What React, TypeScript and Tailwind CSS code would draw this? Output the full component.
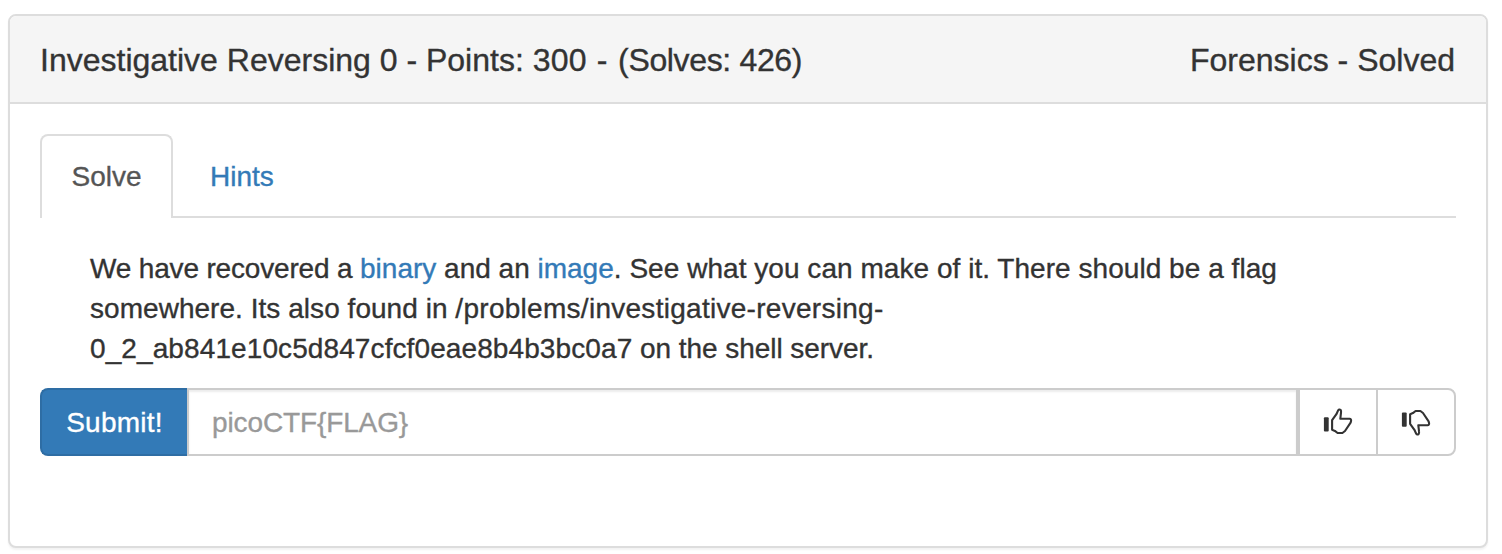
import React from "react";

function ThumbIcon({ down = false }: { down?: boolean }) {
  return (
    <svg width="30" height="28" viewBox="0 0 30 28" fill="none" className={down ? "-scale-y-100" : ""}>
      <rect x="0.9" y="9.2" width="4.8" height="14.4" rx="1" fill="#333" />
      <path
        d="M9.1 12.2 L13.4 6.2 L15 2.6 Q16.2 0.8 17.5 1.8 Q18.4 2.8 18 4.8 L17.3 10.8 L26.6 10.8 Q28.3 10.9 28.1 12.8 L27.6 14.6 L22 23 L19.4 25 L14.6 25 L11.9 22.9 L9.1 21.8 Z"
        stroke="#333"
        strokeWidth="2.1"
        strokeLinejoin="round"
      />
    </svg>
  );
}

export default function App() {
  return (
    <div className="h-[554px] w-[1502px] overflow-hidden bg-white pt-[14px] pl-2 font-['Liberation_Sans',Arial,sans-serif] text-[28px] leading-10 text-[#333] [-webkit-text-stroke:0.35px]">
      <section className="h-[534px] w-[1480px] overflow-hidden rounded-lg border-2 border-[#ddd] bg-white shadow-[0_2px_2px_rgba(0,0,0,0.05)]">
        <header className="flex h-[88px] items-center justify-between border-b-2 border-[#ddd] bg-[#f5f5f5] px-[30px] pt-[2px] text-[32px] leading-9">
          <h3 className="whitespace-nowrap">
            Investigative Reversing 0 - Points: <span className="tracking-[0.3px]">300</span>
            <span className="tracking-[0.9px]"> - </span>
            <span className="tracking-[-0.35px]">(Solves: 426)</span>
          </h3>
          <span className="mr-px whitespace-nowrap">Forensics - Solved</span>
        </header>

        <div className="px-[30px] pt-[30px]">
          <nav className="flex h-[84px]">
            <a className="flex w-[133px] items-center justify-center rounded-t-lg border-2 border-b-0 border-[#ddd] text-[#555]">
              Solve
            </a>
            <div className="-ml-[2px] flex flex-1 items-center rounded-bl-[2px] border-b-2 border-[#ddd] pt-[3px] pl-[39px]">
              <a className="text-[#337ab7]">Hints</a>
            </div>
          </nav>

          <p className="mt-[31px] ml-[50px] h-[120px] whitespace-nowrap">
            <span className="block tracking-[0.04px]">
              <span className="tracking-[-0.17px]">We have recovered a </span>
              <a className="tracking-normal text-[#337ab7]">binary</a>
              <span className="tracking-normal"> and an </span>
              <a className="tracking-normal text-[#337ab7]">image</a>. See what you can make of it. There should be a flag
            </span>
            <span className="block tracking-[0.04px]">
              somewhere. Its also found in <span className="tracking-[0.28px]">/problems/investigative-reversing-</span>
            </span>
            <span className="block">
              <span className="tracking-[0.1px]">0_2_ab841e10c5d847cfcf0eae8b4b3bc0a7</span>
              <span className="tracking-[-0.06px]"> on the shell server.</span>
            </span>
          </p>

          <form className="mt-[19px] flex h-[68px]">
            <button type="button" className="w-[147px] rounded-l-lg border-2 border-r-0 border-[#2e6da4] bg-[#337ab7] pt-px tracking-[0.25px] text-white">
              Submit!
            </button>
            <input
              className="w-[1111px] border-2 border-[#ccc] bg-white pt-[2px] pr-6 pl-[23px] tracking-[-0.12px] shadow-[inset_0_2px_2px_rgba(0,0,0,0.075)] outline-none placeholder:text-[#999]"
              placeholder="picoCTF{FLAG}"
            />
            <button type="button" aria-label="Like" className="flex w-[78px] items-center border-2 border-r-0 border-[#ccc] pl-[23px]">
              <ThumbIcon />
            </button>
            <button type="button" aria-label="Dislike" className="flex w-20 items-center rounded-r-lg border-2 border-[#ccc] pl-[23px]">
              <ThumbIcon down />
            </button>
          </form>
        </div>
      </section>
    </div>
  );
}
